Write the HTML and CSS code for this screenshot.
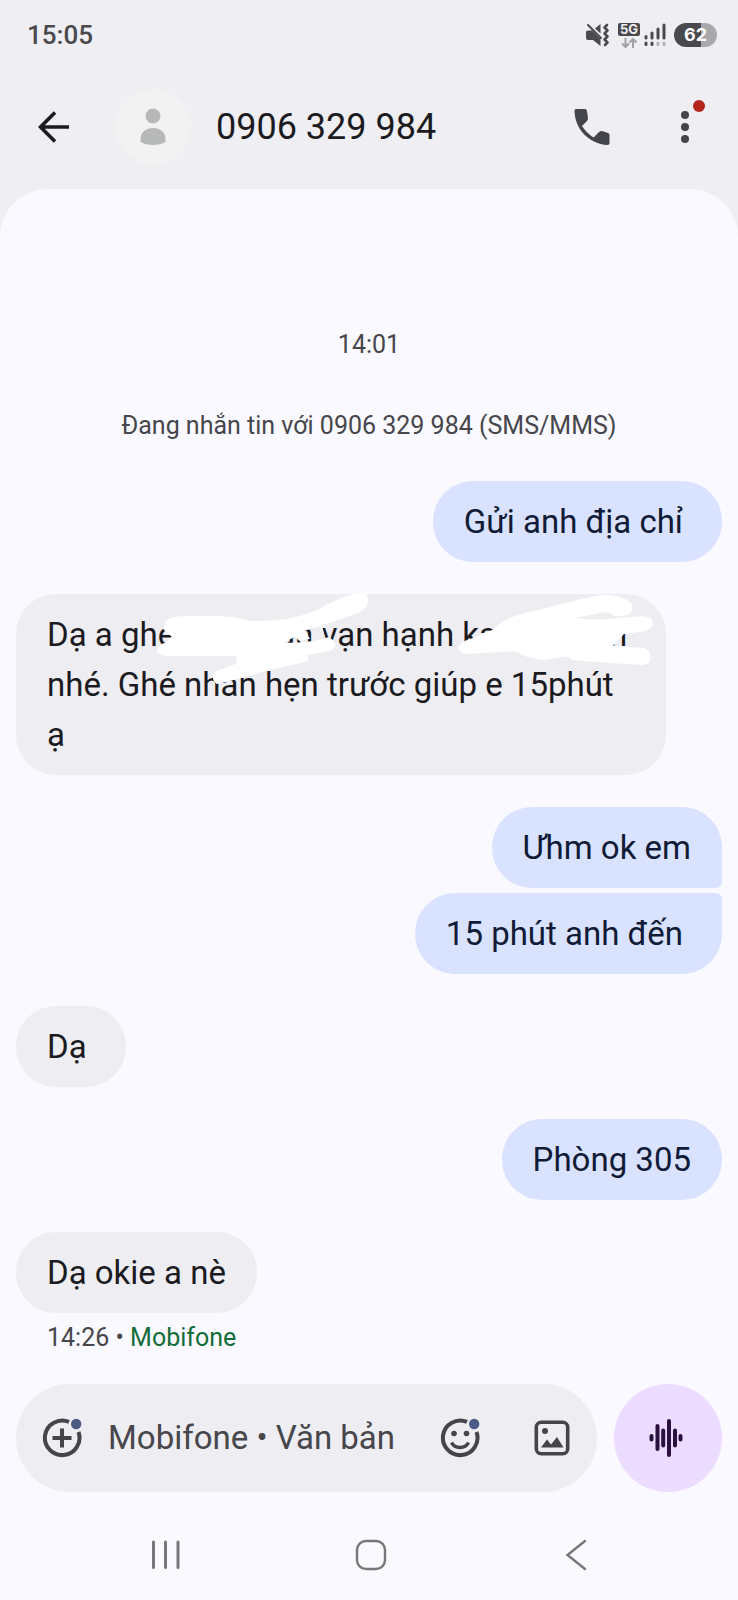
FILE: index.html
```html
<!DOCTYPE html>
<html lang="vi">
<head>
<meta charset="utf-8">
<meta name="viewport" content="width=device-width, initial-scale=1">
<title>0906 329 984</title>
<link rel="stylesheet" href="styles.css">
</head>
<body>
<div class="phone">
  <header class="top">
    <div class="status">
      <time class="clock">15:05</time>
      <div class="indicators">
        <svg class="mute" width="25" height="24" viewBox="0 0 25 24" aria-hidden="true">
          <path fill="#4a494e" d="M1 9.500Q1 7.500 3 7.500H7L15.500 16V23L8 17H3Q1 17 1 15Z M10 5.500L15.500 1V10.500Z"/>
          <path fill="none" stroke="#4a494e" stroke-width="2" stroke-linecap="round" d="M3 2L16 15"/>
          <path fill="none" stroke="#4a494e" stroke-width="2.600" stroke-linejoin="round" stroke-linecap="round" d="M22 2L19.500 4.500L22.500 7.500L19.500 10.500L22.500 13.500L19.500 16.500L22.500 19.500L20 22"/>
        </svg>
        <div class="network">
          <span class="network-tag">5G</span>
          <svg width="16" height="10" viewBox="0 0 16 10" fill="none" stroke="#a2a1a6" stroke-width="2" aria-hidden="true"><path d="M4.500 0V9M1 5.500L4.500 9L8 5.500M12 10V1M8.500 4.500L12 1L15.500 4.500"/></svg>
        </div>
        <svg class="signal" width="22" height="24" viewBox="0 0 22 24" stroke="#4a494e" stroke-width="3" stroke-linecap="round" aria-hidden="true">
          <path d="M2 13.500V15M8 10V15M14 6V15M20 2V15"/><path d="M2 20V21.500M8 20V21.500"/><path stroke="#b4b3b8" d="M14 20V21.500M20 20V21.500"/>
        </svg>
        <span class="battery">62</span>
      </div>
    </div>
    <div class="appbar">
      <button class="icon-btn back" aria-label="Quay lại">
        <svg width="32" height="32" viewBox="0 0 32 32" fill="none" stroke="#1b1b1f" stroke-width="3.600"><path d="M31 16H3M17 1.500L2.500 16L17 30.500"/></svg>
      </button>
      <span class="avatar">
        <svg width="26" height="38" viewBox="0 0 26 38" fill="#b6b9b7" aria-hidden="true"><circle cx="13" cy="8" r="7.500"/><path d="M.5 31C.5 24 6 20 13 20s12.500 4 12.500 11v3Q20 37 13 37T.5 34Z"/></svg>
      </span>
      <h1 class="title">0906 329 984</h1>
      <button class="icon-btn" aria-label="Gọi">
        <svg width="36" height="36" viewBox="0 0 36 36" fill="#44454a"><path d="M2 0H11Q12.500 0 13 2L14 9Q14 10.500 13 12L8 17Q12.500 24 19.500 28.500L25 23Q26 22 28 22L34 24Q35.500 24.500 35.500 26V34Q35.500 36 33.500 36C15 35 1 20 .5 2Q.5 0 2 0Z"/></svg>
      </button>
      <button class="icon-btn more" aria-label="Tùy chọn khác">
        <svg width="8" height="32" viewBox="0 0 8 32" fill="#44454a"><circle cx="4" cy="4" r="4"/><circle cx="4" cy="16" r="4"/><circle cx="4" cy="28" r="4"/></svg>
        <span class="alert-dot"></span>
      </button>
    </div>
  </header>

  <main class="thread">
    <p class="note">14:01</p>
    <p class="note note-channel">Đang nhắn tin với 0906 329 984 (SMS/MMS)</p>

    <div class="group sent">
      <p class="bubble loose">Gửi anh địa chỉ</p>
    </div>
    <div class="group">
      <div class="bubble">
        <p class="covered"><span>Dạ a ghé</span><span class="after-name">an vạn hạnh ka</span><span class="after-street">n</span></p>
        <p>nhé. Ghé nhắn hẹn trước giúp e 15phút ạ</p>
        <svg class="scribble" width="649" height="181" viewBox="0 0 649 181" fill="#fff" aria-hidden="true">
          <path transform="translate(-16 -14) scale(.3333)" d="M495 125Q510 108 560 108H640Q700 108 750 123Q830 122 880 113Q940 100 985 72Q1040 45 1075 37Q1105 35 1105 60Q1104 82 1080 97L1000 125L965 134L975 172L960 138L915 152L930 176L900 184L885 170L850 188Q900 190 945 182L985 172Q1008 180 1005 200Q1000 213 970 217L920 225Q935 240 910 247L800 272L690 303L650 312Q630 295 645 275L712 250L708 228H495Q470 225 471 208Q480 190 497 188L515 170L490 148Z"/>
          <path transform="translate(352 -14) scale(.3333)" d="M270 203Q275 185 305 178L372 150Q410 115 460 102L590 70Q660 50 715 44Q760 45 790 70Q800 90 785 102Q760 112 740 108Q725 95 705 97L625 113Q650 120 720 118L820 108Q855 108 855 132Q850 152 820 155L768 162L735 197L828 204Q850 212 848 235Q844 257 820 255L735 250L610 240Q600 225 580 232L530 240Q480 238 440 214Q380 215 300 222Q272 220 270 203Z"/>
        </svg>
      </div>
    </div>
    <div class="group sent">
      <p class="bubble first">Ưhm ok em</p>
      <p class="bubble last loose">15 phút anh đến</p>
    </div>
    <div class="group">
      <p class="bubble loose">Dạ</p>
    </div>
    <div class="group sent">
      <p class="bubble">Phòng 305</p>
    </div>
    <div class="group">
      <p class="bubble">Dạ okie a nè</p>
    </div>
    <p class="meta">14:26 • <span class="carrier">Mobifone</span></p>
  </main>

  <form class="composer">
    <div class="field">
      <button type="button" class="icon-btn" aria-label="Thêm">
        <svg width="40" height="40" viewBox="0 0 40 40" fill="none" stroke="#44454a" stroke-width="4"><path d="M27 3.900A17.300 17.300 0 1 0 36.500 14M20 10.500V29.500M10.500 20H29.500"/><circle cx="34.200" cy="6" r="5.200" fill="#4c5b86" stroke="none"/></svg>
      </button>
      <input class="entry" type="text" aria-label="Tin nhắn" placeholder="Mobifone • Văn bản">
      <button type="button" class="icon-btn" aria-label="Biểu tượng cảm xúc">
        <svg width="40" height="40" viewBox="0 0 40 40" fill="none" stroke="#44454a" stroke-width="4"><path d="M27 3.900A17.300 17.300 0 1 0 36.500 14"/><path stroke-width="3.400" d="M11.500 24.500Q14 29.500 20 29.500T28.500 24.500"/><circle cx="14" cy="15.500" r="2.800" fill="#44454a" stroke="none"/><circle cx="26.500" cy="15.500" r="2.800" fill="#44454a" stroke="none"/><circle cx="34.200" cy="6" r="5.200" fill="#4c5b86" stroke="none"/></svg>
      </button>
      <button type="button" class="icon-btn gallery" aria-label="Thư viện ảnh">
        <svg width="36" height="36" viewBox="0 0 36 36" fill="none" stroke="#44454a" stroke-width="3.600"><rect x="2.300" y="2.300" width="31.400" height="31.400" rx="5"/><circle cx="11" cy="11" r="3" fill="#44454a" stroke="none"/><path fill="#44454a" stroke="none" d="M7 27.500L13 19.500L17 24.500L23 17L29.500 27.500Z"/></svg>
      </button>
    </div>
    <button type="button" class="voice" aria-label="Ghi âm">
      <svg width="38" height="40" viewBox="0 0 38 40" stroke="#2b1040" stroke-width="4" stroke-linecap="round"><path d="M2.500 18V21.500M8.500 8V31M14.200 12.500V27.500M20 3V37M26 12.500V27.500M31.500 18V21.500"/></svg>
    </button>
  </form>

  <nav class="sysnav">
    <button aria-label="Gần đây"><svg width="32" height="32" viewBox="0 0 32 32" stroke="#77767b" stroke-width="3" stroke-linecap="round"><path d="M3.500 3V28.500M15.500 3V28.500M28 3V28.500"/></svg></button>
    <button aria-label="Màn hình chính"><svg width="32" height="32" viewBox="0 0 32 32" fill="none" stroke="#77767b" stroke-width="2.400"><rect x="2" y="2" width="28" height="28" rx="9"/></svg></button>
    <button aria-label="Trở lại"><svg width="32" height="32" viewBox="0 0 32 32" fill="none" stroke="#77767b" stroke-width="2.400" stroke-linecap="round"><path d="M25 2L7.500 16L25 30"/></svg></button>
  </nav>
</div>
</body>
</html>
```
FILE: styles.css
```css
* { box-sizing: border-box; }
body {
  margin: 0;
  background: #faf9ff;
  color: #1b1b1f;
  font-family: Roboto, "Noto Sans", sans-serif;
}
p, h1 { margin: 0; }
svg { display: block; flex: none; }
button { border: 0; padding: 0; background: none; font: inherit; }

.phone { min-height: 100vh; display: flex; flex-direction: column; }

.top { background: #efeef3; padding-bottom: 48px; margin-bottom: -48px; }
.status {
  height: 70px;
  padding: 0 21px 0 27px;
  display: flex;
  align-items: center;
  justify-content: space-between;
}
.clock { font-size: 26px; font-weight: 500; color: #4a494e; }
.indicators { display: flex; align-items: center; }
.mute { margin-right: 8px; }
.network { display: flex; flex-direction: column; align-items: center; gap: 2px; margin-right: 4px; }
.network-tag {
  width: 22px;
  background: #4a494e;
  border-radius: 2px;
  color: #efeef3;
  font: 700 13px/13px Inter, sans-serif;
  text-align: center;
}
.signal { margin-right: 8px; }
.battery {
  width: 43px;
  border-radius: 12px;
  background: linear-gradient(to right, #4a494e 62%, #a9a8ad 62%);
  color: #fff;
  font: 700 18px/24px Inter, sans-serif;
  text-align: center;
}

.appbar { height: 119px; padding: 0 25px 6px 26px; display: flex; align-items: center; }
.icon-btn { flex: none; width: 56px; height: 56px; display: grid; place-items: center; }
.avatar {
  flex: none;
  width: 76px;
  height: 76px;
  margin: 0 25px 0 33px;
  border-radius: 50%;
  background: #f2f2f2;
  display: grid;
  place-items: center;
}
.title { flex: 1; font-size: 36px; line-height: 48px; font-weight: 400; }
.more { position: relative; margin-left: 37px; }
.alert-dot {
  position: absolute;
  top: 1px;
  right: 8px;
  width: 12px;
  height: 12px;
  border-radius: 50%;
  background: #b3261e;
}

.thread {
  flex: 1;
  padding: 141px 16px 24px;
  border-radius: 48px 48px 0 0;
  background: #faf9ff;
}
.note { font-size: 25px; line-height: 30px; text-align: center; color: #46464b; }
.note-channel { margin: 51px 0 40px; }

.group { display: flex; flex-direction: column; align-items: flex-start; gap: 5px; margin-bottom: 32px; }
.sent { align-items: flex-end; }
.bubble {
  position: relative;
  max-width: 92%;
  padding: 16px 31px 15px;
  border-radius: 40px;
  background: #eeedf2;
  font-size: 33px;
  line-height: 50px;
}
.sent .bubble { background: #d9e2ff; color: #101b36; }
.loose { padding-right: 39px; }
.first { border-bottom-right-radius: 6px; }
.last { border-top-right-radius: 6px; }
.covered { display: flex; white-space: nowrap; }
.after-name { margin-left: 102px; }
.after-street { margin-left: 112px; }
.scribble { position: absolute; top: 0; left: 0; }
.meta { margin-top: -22px; padding-left: 31px; font-size: 25px; line-height: 30px; color: #46464b; }
.carrier { color: #146c3a; }

.composer { display: flex; gap: 17px; padding: 0 16px; }
.field {
  flex: 1;
  min-width: 0;
  height: 108px;
  padding: 0 17px 0 18px;
  border-radius: 54px;
  background: #eeedf2;
  display: flex;
  align-items: center;
}
.entry {
  flex: 1;
  min-width: 0;
  margin-left: 18px;
  padding: 0;
  border: 0;
  background: none;
  font: 33px/50px Roboto, "Noto Sans", sans-serif;
  color: #1b1b1f;
}
.entry::placeholder { color: #46464b; opacity: 1; }
.gallery { margin-left: 36px; }
.voice {
  flex: none;
  width: 108px;
  height: 108px;
  border-radius: 50%;
  background: #ecdcff;
  display: grid;
  place-items: center;
}

.sysnav { display: flex; justify-content: space-around; padding: 47px 60px 29px 64px; }
.sysnav button { width: 32px; height: 32px; }
```
